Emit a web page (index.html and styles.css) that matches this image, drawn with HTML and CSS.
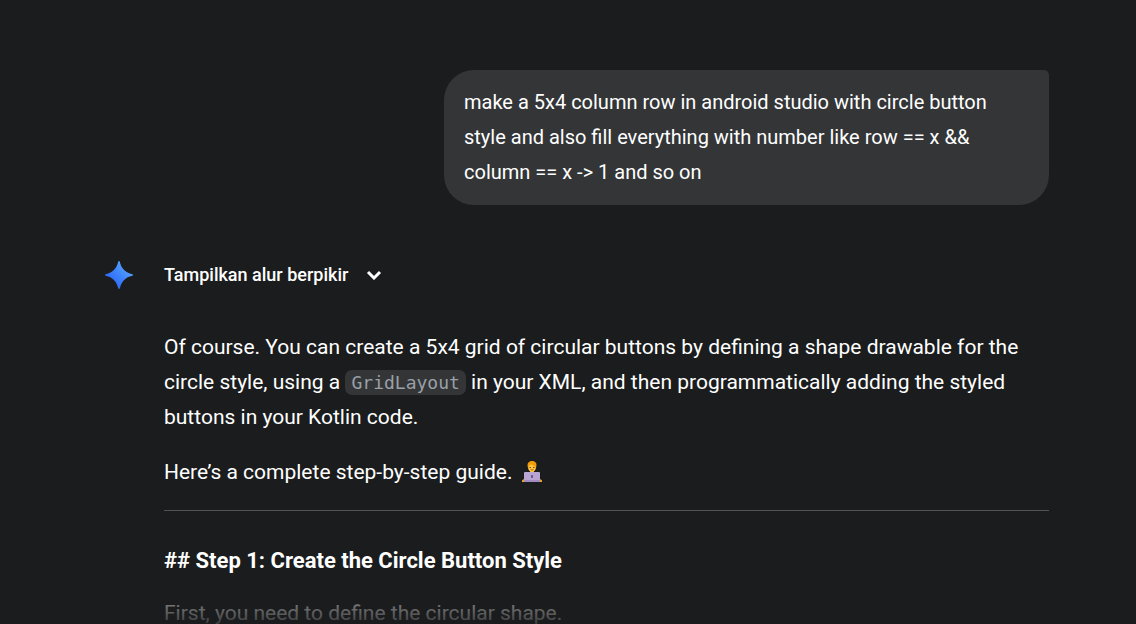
FILE: index.html
```html
<!DOCTYPE html>
<html lang="id">
<head>
<meta charset="utf-8">
<meta name="viewport" content="width=device-width, initial-scale=1">
<title>Chat</title>
<link rel="stylesheet" href="styles.css">
</head>
<body>
<main class="chat">
  <section class="prompt">
    <p class="bubble">make a 5x4 column row in android studio with circle button style and also fill everything with number like row == x &amp;&amp; column == x -&gt; 1 and so on</p>
  </section>
  <article class="answer">
    <svg class="spark" viewBox="0 0 28 28" aria-hidden="true">
      <defs>
        <linearGradient id="spark-fill" x1="0" y1="1" x2="1" y2="0">
          <stop offset="0.15" stop-color="#2b63f5"/>
          <stop offset="0.5" stop-color="#3d83fb"/>
          <stop offset="0.9" stop-color="#62aaff"/>
        </linearGradient>
      </defs>
      <path fill="url(#spark-fill)" d="M14 0c.4 0 .7.3.8.7.6 2.300 1.300 4.200 2.500 6.100a13 13 0 0 0 4 4c1.800 1.200 3.700 1.900 6 2.400.4.100.7.400.7.800s-.3.700-.7.800c-2.300.5-4.200 1.200-6 2.400a13 13 0 0 0-4 4c-1.200 1.900-1.900 3.800-2.500 6.100-.1.400-.4.700-.8.700s-.7-.3-.8-.7c-.6-2.300-1.300-4.200-2.500-6.100a13 13 0 0 0-4-4c-1.800-1.200-3.700-1.900-6-2.400C.3 14.700 0 14.400 0 14s.3-.7.7-.8c2.300-.5 4.200-1.200 6-2.400a13 13 0 0 0 4-4c1.200-1.900 1.900-3.800 2.500-6.100.1-.4.400-.7.800-.7z"/>
    </svg>
    <div class="content">
      <button class="thoughts" type="button">
        <span>Tampilkan alur berpikir</span>
        <svg class="chevron" viewBox="0 0 16 10" aria-hidden="true"><path d="M2 2l6 6 6-6"/></svg>
      </button>
      <div class="body">
        <p>Of course. You can create a 5x4 grid of circular buttons by defining a shape drawable for the circle style, using a <code>GridLayout</code> in your XML, and then programmatically adding the styled buttons in your Kotlin code.</p>
        <p>Here’s a complete step-by-step guide.
          <svg class="emoji" viewBox="0 0 20 22" role="img" aria-label="technologist">
            <path fill="#f5a623" d="M0 21v-1c0-1 1-2 3-2h14c2 0 3 1 3 2v1z"/>
            <path fill="#b98be0" d="M3 14c1-2 3-2 5-3h4c2 1 4 1 5 3v5H3z"/>
            <path fill="#e89a12" d="M8 9h4v3H8z"/>
            <ellipse cx="10" cy="6" rx="4" ry="5" fill="#ffc83d"/>
            <path fill="#f29b0b" d="M6 7C4.500 2 7 0 10 0c3.500 0 5.500 2 4 7l-1-2c-1 0-3-.5-4-2-1 1.500-2 2-2 2z"/>
            <path fill="#704020" d="M7.500 6h1.500v1H7.500zM11 6h1.500v1H11z"/>
            <path fill="none" stroke="#c65a20" d="M8.500 8.500q1.500 1 3 0"/>
            <rect x="2" y="11" width="16" height="9" rx="1" fill="#b9a5d3"/>
            <path fill="#a18bc0" d="M2 19h16v2H2z"/>
            <rect x="9" y="14" width="2" height="3" rx="1" fill="#655182"/>
          </svg>
        </p>
        <hr>
        <h3>## Step 1: Create the Circle Button Style</h3>
        <p>First, you need to define the circular shape.</p>
      </div>
    </div>
  </article>
  <div class="fade"></div>
</main>
</body>
</html>
```
FILE: styles.css
```css
* {
  box-sizing: border-box;
}

body {
  margin: 0;
  background: #1b1c1d;
  color: #fff;
  font-family: Roboto, "Open Sans", sans-serif;
  font-size: 20px;
  line-height: 35px;
}

p,
h3 {
  margin: 0;
}

.chat {
  position: relative;
  height: 100vh;
  overflow: hidden;
  padding: 70px 87px 0 105px;
}

.prompt {
  display: flex;
  justify-content: flex-end;
}

.bubble {
  max-width: 605px;
  padding: 15px 40px 15px 20px;
  background: #333537;
  border-radius: 30px 5px 30px 30px;
}

.answer {
  display: flex;
  align-items: flex-start;
  gap: 31px;
  margin-top: 55px;
}

.spark {
  flex: none;
  width: 28px;
  height: 28px;
  margin-top: 1px;
}

.content {
  flex: 1;
  min-width: 0;
}

.thoughts {
  display: flex;
  align-items: center;
  gap: 18px;
  padding: 0;
  border: 0;
  background: none;
  color: #fff;
  font: 500 18px/30px Roboto, "Open Sans", sans-serif;
  cursor: pointer;
}

.chevron {
  width: 16px;
  height: 10px;
  fill: none;
  stroke: #fff;
  stroke-width: 3;
}

.body {
  margin-top: 40px;
  font-size: 21px;
}

.body p + p {
  margin-top: 20px;
}

code {
  padding: 2px 6px;
  border-radius: 7px;
  background: #333537;
  color: #9aa0a6;
  font: 18px/18px "DejaVu Sans Mono", monospace;
}

.emoji {
  width: 20px;
  height: 22px;
  margin-left: 4px;
  vertical-align: -4px;
}

hr {
  height: 1px;
  margin: 20px 0 32px;
  border: 0;
  background: #505254;
}

h3 {
  margin-bottom: 18px;
  font-size: 22px;
  font-weight: 700;
}

.fade {
  position: absolute;
  inset: auto 0 0;
  height: 50px;
  background: linear-gradient(to bottom, rgb(27 28 29 / 0), rgb(27 28 29 / 0.6) 30px, rgb(27 28 29 / 0.85));
}
```
